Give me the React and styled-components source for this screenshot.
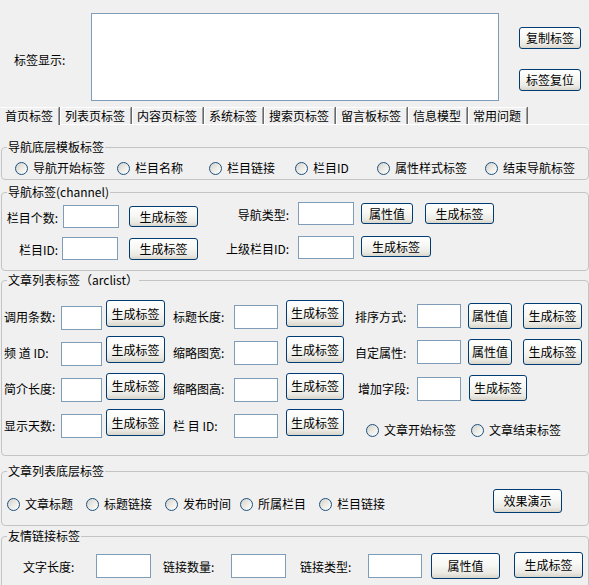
import React from 'react';
import styled, { createGlobalStyle } from 'styled-components';

const GlobalStyle = createGlobalStyle`
  html, body {
    margin: 0;
    padding: 0;
    background: #f0f0f0;
  }
  body {
    font-family: "Noto Sans CJK SC", "Noto Sans", sans-serif;
    font-size: 12px;
    color: #000;
  }
`;

const Page = styled.div`
  width: 589px;
  height: 585px;
  overflow: hidden;
  background: #f0f0f0;
`;

const Top = styled.div`
  display: flex;
  height: 107px;
`;

const TopLabel = styled.div`
  width: 77px;
  padding-left: 14px;
  margin-top: 53px;
  line-height: 14px;
`;

const TagArea = styled.textarea`
  box-sizing: border-box;
  width: 408px;
  height: 88px;
  margin: 13px 0 0;
  border: 1px solid #7f9db9;
  background: #fff;
  resize: none;
  outline: none;
`;

const TopButtons = styled.div`
  display: flex;
  flex-direction: column;
  gap: 20px;
  margin-left: 20px;
  padding-top: 27px;
`;

const TabBar = styled.div`
  display: flex;
  align-items: flex-start;
  height: 17px;
  border-bottom: 1px solid #fff;
`;

const Tab = styled.div`
  box-sizing: border-box;
  height: ${p => (p.$active ? 18 : 17)}px;
  padding: 0 5px 0 4px;
  margin-right: 1px;
  line-height: 15px;
  white-space: nowrap;
  background: #f0f0f0;
  border-top: 1px solid #fff;
  border-left: 1px solid ${p => (p.$active ? '#f0f0f0' : '#fff')};
  border-right: 1px solid #a0a0a0;
  box-shadow: 1px 0 0 #696969;
`;

const Group = styled.fieldset`
  box-sizing: border-box;
  min-width: 0;
  margin: ${p => p.$mt}px 0 0 1px;
  padding: ${p => p.$pad};
  border: 1px solid #c4c4c4;
  border-radius: 4px;
`;

const Legend = styled.legend`
  margin-left: 5px;
  padding: 0 1px;
  line-height: 14px;
  font-size: 12px;
`;

const Row = styled.div`
  display: flex;
  align-items: center;
  height: ${p => p.$h}px;
  margin-top: ${p => p.$mt || 0}px;
  padding-left: ${p => p.$pl || 0}px;
`;

const Label = styled.span`
  flex-shrink: 0;
  width: ${p => p.$w}px;
  margin-left: ${p => p.$ml || 0}px;
  margin-top: ${p => (p.$dy || 0) * 2}px;
  text-align: ${p => (p.$right ? 'right' : 'left')};
  line-height: 14px;
  white-space: pre;
`;

const Field = styled.input`
  box-sizing: border-box;
  flex-shrink: 0;
  width: ${p => p.$w}px;
  height: ${p => p.$h || 24}px;
  margin: ${p => (p.$dy || 0) * 2}px 0 0 ${p => p.$ml || 0}px;
  padding: 0 2px;
  border: 1px solid #7f9db9;
  background: #fff;
  outline: none;
`;

const Button = styled.button`
  box-sizing: border-box;
  flex-shrink: 0;
  width: ${p => p.$w}px;
  height: ${p => p.$h || 23}px;
  margin: ${p => (p.$dy || 0) * 2}px 0 0 ${p => p.$ml || 0}px;
  padding: 0;
  border: 1px solid #003c74;
  border-radius: 3px;
  background: linear-gradient(180deg, #ffffff 0%, #f7f7f4 45%, #ebeae4 80%, #d9d5ca 100%);
  font-family: inherit;
  font-size: 12px;
  line-height: 14px;
  color: #000;
  white-space: nowrap;
`;

const RadioItem = styled.label`
  display: flex;
  align-items: center;
  flex-shrink: 0;
  width: ${p => (p.$w ? `${p.$w}px` : 'auto')};
  margin: ${p => (p.$dy || 0) * 2}px 0 0 ${p => p.$ml || 0}px;
  line-height: 14px;
  white-space: nowrap;
`;

const RadioDot = styled.span`
  box-sizing: border-box;
  flex-shrink: 0;
  width: 13px;
  height: 13px;
  border: 1px solid #1c5180;
  border-radius: 50%;
  background: linear-gradient(135deg, #d3d1c8 0%, #eeede8 55%, #ffffff 100%);
`;

const RadioText = styled.span`
  margin-left: 5px;
`;

const Radio = ({ children, ...rest }) => (
  <RadioItem {...rest}>
    <RadioDot />
    <RadioText>{children}</RadioText>
  </RadioItem>
);

const tabs = ['首页标签', '列表页标签', '内容页标签', '系统标签', '搜索页标签', '留言板标签', '信息模型', '常用问题'];

const navRadios = [
  ['导航开始标签', 102],
  ['栏目名称', 92],
  ['栏目链接', 86],
  ['栏目ID', 82],
  ['属性样式标签', 108],
  ['结束导航标签', 0],
];

const listRadios = [
  ['文章标题', 79],
  ['标题链接', 79],
  ['发布时间', 75],
  ['所属栏目', 79],
  ['栏目链接', 79],
];

// arclist rows, with small vertical nudges per column
const arcRows = [
  { a: '调用条数:', b: '标题长度:', c: '排序方式:', btnA: 4.5, btnB: 5, fieldB: -1, cUp: -2, attr: true },
  { a: '频 道 ID:', b: '缩略图宽:', c: '自定属性:', btnA: 4.5, btnB: 4.5, fieldB: -1, cUp: -2.5, attr: true },
  { a: '简介长度:', b: '缩略图高:', c: '增加字段:', btnA: 4, btnB: 4, fieldB: 0, cUp: -1.5, attr: false },
];

export default function App() {
  return (
    <Page>
      <GlobalStyle />
      <Top>
        <TopLabel>标签显示:</TopLabel>
        <TagArea />
        <TopButtons>
          <Button $w={62} $h={22}>复制标签</Button>
          <Button $w={62} $h={22}>标签复位</Button>
        </TopButtons>
      </Top>

      <TabBar>
        {tabs.map((t, i) => (
          <Tab key={t} $active={i === 0}>{t}</Tab>
        ))}
      </TabBar>

      <Group $mt={15} $pad="7px 0 4px">
        <Legend>导航底层模板标签</Legend>
        <Row $h={14} $pl={13}>
          {navRadios.map(([t, w]) => (
            <Radio key={t} $w={w}>{t}</Radio>
          ))}
        </Row>
      </Group>

      <Group $mt={5} $pad="6px 0 10px">
        <Legend>导航标签(channel)</Legend>
        <Row $h={23}>
          <Label $w={56} $right $dy={1}>栏目个数:</Label>
          <Field $ml={5} $w={56} $h={23} />
          <Button $ml={10} $w={69} $h={21}>生成标签</Button>
          <Label $w={91} $right $dy={-2}>导航类型:</Label>
          <Field $ml={9} $w={56} $h={23} $dy={-3} />
          <Button $ml={7} $w={52} $h={21} $dy={-3}>属性值</Button>
          <Button $ml={12} $w={69} $h={21} $dy={-3}>生成标签</Button>
        </Row>
        <Row $h={23} $mt={9}>
          <Label $w={56} $right $dy={1}>栏目ID:</Label>
          <Field $ml={4} $w={56} $h={23} />
          <Button $ml={11} $w={69} $h={22} $dy={0.5}>生成标签</Button>
          <Label $w={91} $right>上级栏目ID:</Label>
          <Field $ml={9} $w={56} $h={23} $dy={-1} />
          <Button $ml={7} $w={70} $h={21} $dy={-2}>生成标签</Button>
        </Row>
      </Group>

      <Group $mt={2} $pad="19px 0 17px">
        <Legend>文章列表标签（arclist）</Legend>
        {arcRows.map((r, i) => (
          <Row key={r.a} $h={24} $mt={i === 0 ? 0 : 12}>
            <Label $ml={2} $w={57} $dy={-1}>{r.a}</Label>
            <Field $w={41} />
            <Button $ml={4} $w={59} $h={27} $dy={-r.btnA}>生成标签</Button>
            <Label $ml={8} $w={61} $dy={-1}>{r.b}</Label>
            <Field $w={44} $dy={r.fieldB} />
            <Button $ml={8} $w={58} $h={27} $dy={-r.btnB}>生成标签</Button>
            <Label $ml={r.attr ? 11 : 14} $w={r.attr ? 62 : 59} $dy={-1.5}>{r.c}</Label>
            <Field $w={44} $dy={r.cUp} />
            {r.attr ? (
              <>
                <Button $ml={7} $w={44} $h={26} $dy={r.cUp}>属性值</Button>
                <Button $ml={11} $w={59} $h={26} $dy={r.cUp}>生成标签</Button>
              </>
            ) : (
              <Button $ml={8} $w={58} $h={26} $dy={-2}>生成标签</Button>
            )}
          </Row>
        ))}
        <Row $h={24} $mt={12}>
          <Label $ml={2} $w={57}>显示天数:</Label>
          <Field $w={41} />
          <Button $ml={4} $w={59} $h={27} $dy={-3.5}>生成标签</Button>
          <Label $ml={8} $w={61}>栏 目 ID:</Label>
          <Field $w={44} />
          <Button $ml={8} $w={58} $h={27} $dy={-3.5}>生成标签</Button>
          <Radio $ml={22} $dy={4}>文章开始标签</Radio>
          <Radio $ml={15} $dy={4}>文章结束标签</Radio>
        </Row>
      </Group>

      <Group $mt={8} $pad="11px 0 12px">
        <Legend>文章列表底层标签</Legend>
        <Row $h={24} $pl={5}>
          {listRadios.map(([t, w]) => (
            <Radio key={t} $w={w} $dy={3}>{t}</Radio>
          ))}
          <Button $ml={95} $w={69} $h={24}>效果演示</Button>
        </Row>
      </Group>

      <Group $mt={3} $pad="11px 0 20px">
        <Legend>友情链接标签</Legend>
        <Row $h={24}>
          <Label $ml={21} $w={73} $dy={1}>文字长度:</Label>
          <Field $w={55} />
          <Label $ml={12} $w={68} $dy={1}>链接数量:</Label>
          <Field $w={55} />
          <Label $ml={14} $w={68} $dy={1}>链接类型:</Label>
          <Field $w={54} />
          <Button $ml={9} $w={69} $h={26}>属性值</Button>
          <Button $ml={14} $w={69} $h={26} $dy={-1}>生成标签</Button>
        </Row>
      </Group>
    </Page>
  );
}
